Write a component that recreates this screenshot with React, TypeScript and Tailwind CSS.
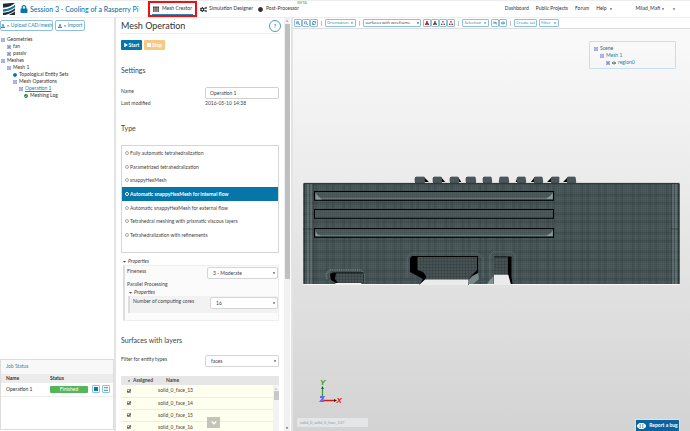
import type { ReactNode } from "react";
import {
  FaCaretDown,
  FaCheckCircle,
  FaCircle,
  FaCogs,
  FaEye,
  FaEyeSlash,
  FaLock,
  FaPlay,
  FaSearchMinus,
  FaSearchPlus,
  FaSyncAlt,
  FaTh,
  FaUpload,
} from "react-icons/fa";

const MESH_TYPES = [
  "Fully automatic tetrahedralization",
  "Parametrized tetrahedralization",
  "snappyHexMesh",
  "Automatic snappyHexMesh for internal flow",
  "Automatic snappyHexMesh for external flow",
  "Tetrahedral meshing with prismatic viscous layers",
  "Tetrahedralization with refinements",
];

const FACES = ["solid_0_face_13", "solid_0_face_14", "solid_0_face_15", "solid_0_face_16"];

function Expander({ open }: { open?: boolean }) {
  return (
    <svg viewBox="0 0 8 8" className="size-1 shrink-0">
      <rect x="0.5" y="0.5" width="7" height="7" fill="#dfe3fa" stroke="#7b88cf" />
      <path d={open ? "M2 4h4" : "M2 4h4M4 2v4"} stroke="#3b4bb0" strokeWidth="1.2" />
    </svg>
  );
}

function TreeRow({ indent, icon, children }: { indent: string; icon: ReactNode; children: ReactNode }) {
  return (
    <li className={`flex h-[7px] items-center gap-0.5 whitespace-nowrap ${indent}`}>
      {icon}
      {children}
    </li>
  );
}

function ToolButton({ children, label }: { children: ReactNode; label?: string }) {
  return (
    <button
      type="button"
      aria-label={label}
      className="flex h-2 shrink-0 items-center gap-0.5 rounded-[1px] border border-[#8cc0dc] bg-white px-px text-[4px] whitespace-nowrap text-[#2a76a2]"
    >
      {children}
    </button>
  );
}

function Divider() {
  return <span className="mx-[3px] h-[5px] w-px bg-[#c4bfba]" />;
}

function SelectBox({ id, value, className }: { id: string; value: string; className: string }) {
  return (
    <div className={`relative ${className}`}>
      <select
        id={id}
        className="block h-3 w-full appearance-none rounded-[2px] border border-[#d5d5d5] bg-white px-[5px] text-[5px] text-[#444]"
      >
        <option>{value}</option>
      </select>
      <FaCaretDown className="pointer-events-none absolute top-1 right-0.5 size-1 text-[#222]" />
    </div>
  );
}

function Header() {
  return (
    <header className="flex h-[18px] shrink-0 items-center border-t border-b border-[#eeeeee] bg-white text-[5px] text-[#333]">
      <svg viewBox="0 0 36 36" className="ml-[3px] size-3 shrink-0">
        <path d="M0 2C10 1 20 0 36 0V36H0Z" fill="#202b33" />
        <path d="M0 14C14 14 25 9 36 0V7C25 15 13 20 0 20Z" fill="#fff" />
        <path d="M0 20C14 19 26 14 36 6V14C25 22 13 25 0 26Z" fill="#0a78b0" />
        <path d="M0 26C16 25 27 20 36 13V16C27 24 14 29 0 29Z" fill="#fff" />
        <path d="M7 36C19 33 29 28 36 22V25C30 30 24 33 17 36Z" fill="#fff" />
      </svg>
      <FaLock className="ml-[5px] size-2 shrink-0 text-[#0876ab]" />
      <h1 className="ml-0.5 w-[118px] shrink-0 text-[7px] font-medium whitespace-nowrap text-[#1273a6]">
        Session 3 - Cooling of a Rasperry Pi
      </h1>
      <nav className="flex shrink-0 items-center whitespace-nowrap">
        <a href="#mesh" className="flex h-4 w-[49px] items-center justify-center border-2 border-[#ee1111]">
          <span className="mt-px flex h-2.5 items-center gap-[3px] border-b border-[#2c86b3] px-px">
            <FaTh className="size-1.5" />
            Mesh Creator
          </span>
        </a>
        <a href="#simulation" className="ml-[3px] flex w-[58px] items-center gap-0.5">
          <FaCogs className="size-[7px]" />
          Simulation Designer
        </a>
        <a href="#post" className="relative flex items-center gap-[3px]">
          <FaCircle className="size-[5px]" />
          Post-Processor
          <span className="absolute -top-1 -right-2 text-[4px] leading-none text-[#559966]">BETA</span>
        </a>
      </nav>
      <nav className="mr-[14px] ml-auto flex items-center gap-[7px]">
        <a href="#dashboard">Dashboard</a>
        <a href="#projects">Public Projects</a>
        <a href="#forum">Forum</a>
        <a href="#help" className="mr-4 flex items-center gap-0.5">
          Help <FaCaretDown className="size-1" />
        </a>
        <a href="#account" className="flex items-center gap-px">
          Milad_Mafi <FaCaretDown className="size-1" />
        </a>
        <button type="button" aria-label="More">
          <FaCaretDown className="size-1" />
        </button>
      </nav>
    </header>
  );
}

function Sidebar() {
  return (
    <aside className="flex w-[116px] shrink-0 flex-col border-r-2 border-[#e3e3e3] text-[5px] text-[#333]">
      <div className="flex gap-0.5 pt-0.5">
        <button
          type="button"
          className="flex h-[11px] w-[53px] items-center justify-center gap-px rounded-[2px] border border-[#8cc0dc] whitespace-nowrap text-[#2f7fac]"
        >
          <FaUpload className="size-1 shrink-0" />
          <FaCaretDown className="size-1 shrink-0" />
          Upload CAD/mesh
        </button>
        <button
          type="button"
          className="flex h-[11px] w-[30px] items-center justify-center gap-px rounded-[2px] border border-[#8cc0dc] text-[#2f7fac]"
        >
          <FaUpload className="size-1" />
          <FaCaretDown className="size-1" />
          Import
        </button>
      </div>
      <ul className="mt-[5px]">
        <TreeRow indent="pl-px" icon={<Expander open />}>Geometries</TreeRow>
        <TreeRow indent="pl-[7px]" icon={<Expander />}>fan</TreeRow>
        <TreeRow indent="pl-[7px]" icon={<Expander />}>passiv</TreeRow>
        <TreeRow indent="pl-px" icon={<Expander open />}>Meshes</TreeRow>
        <TreeRow indent="pl-[7px]" icon={<Expander open />}>Mesh 1</TreeRow>
        <TreeRow indent="pl-[13px]" icon={<FaCircle className="size-1 text-[#0a78b0]" />}>Topological Entity Sets</TreeRow>
        <TreeRow indent="pl-[13px]" icon={<Expander open />}>Mesh Operations</TreeRow>
        <TreeRow indent="pl-[19px]" icon={<Expander open />}>
          <a href="#operation" className="text-[#1f7db0] underline">Operation 1</a>
        </TreeRow>
        <TreeRow indent="pl-6" icon={<FaCheckCircle className="size-1 text-[#138a2a]" />}>Meshing Log</TreeRow>
      </ul>
      <section className="mt-auto mb-px h-[71px] border border-[#dddddd]">
        <h2 className="flex h-[14px] items-center bg-[#f8f8f8] px-[5px] text-[#3b83ac]">Job Status</h2>
        <table className="w-full table-fixed text-left">
          <thead>
            <tr className="h-[9px] bg-[#ececec] leading-none">
              <th className="w-[45px] pl-[5px]">Name</th>
              <th className="pl-1">Status</th>
              <th className="w-[25px]" />
            </tr>
          </thead>
          <tbody>
            <tr className="h-[13px] border-b border-[#eeeeee] leading-none">
              <td className="pl-[5px]">Operation 1</td>
              <td className="pl-1">
                <span className="flex h-[7px] items-center justify-center rounded-[1px] bg-[#55b559] text-white">Finished</span>
              </td>
              <td>
                <div className="flex justify-center gap-0.5">
                  <button type="button" aria-label="Stop job" className="flex size-2 items-center justify-center rounded-[1px] border border-[#8cc0dc]">
                    <span className="size-1 bg-[#0a78b0]" />
                  </button>
                  <button type="button" aria-label="Job details" className="flex size-2 items-center justify-center rounded-[1px] border border-[#8cc0dc]">
                    <svg viewBox="0 0 4 4" className="size-1">
                      <path d="M0 0H4V1.3H0ZM0 2.7H4V4H0Z" fill="#5f9fc2" />
                    </svg>
                  </button>
                </div>
              </td>
            </tr>
          </tbody>
        </table>
      </section>
    </aside>
  );
}

function OperationPanel() {
  return (
    <main className="relative flex w-[175px] shrink-0 overflow-hidden text-[5px] leading-[8px] text-[#444]">
      <div className="w-[163px] shrink-0 pl-[5px]">
        <div className="flex h-4 items-center justify-between border-b border-[#eeeeee]">
          <h2 className="text-[9px] text-[#333]">Mesh Operation</h2>
          <button
            type="button"
            className="mr-[-2px] flex size-3 items-center justify-center rounded-full border border-[#4e9bc4] font-bold text-[#2f7fac]"
          >
            ?
          </button>
        </div>
        <div className="mt-[6px] flex gap-0.5 font-bold text-white">
          <button type="button" className="flex h-[10px] w-[21px] items-center justify-center gap-px rounded-[1px] bg-[#0675a8]">
            <FaPlay className="size-1" />
            Start
          </button>
          <button type="button" disabled className="flex h-[10px] w-[21px] items-center justify-center gap-px rounded-[1px] bg-[#f8c982]">
            <span className="size-1 bg-white" />
            Stop
          </button>
        </div>

        <h3 className="mt-[15px] text-[7px] leading-[10px]">Settings</h3>
        <div className="mt-3 flex justify-between">
          <label htmlFor="op-name">Name</label>
          <input
            id="op-name"
            defaultValue="Operation 1"
            className="h-3 w-[74px] rounded-[2px] border border-[#d0d0d0] px-1"
          />
        </div>
        <div className="flex justify-between">
          <span>Last modified</span>
          <span className="w-[74px]">2016-05-10 14:38</span>
        </div>

        <h3 className="mt-4 text-[7px] leading-[10px]">Type</h3>
        <fieldset className="mt-3 h-[108px] border border-[#d5d5d5]">
          <div className="grid h-24 grid-rows-7">
            {MESH_TYPES.map((type) => (
              <label
                key={type}
                className="flex items-center gap-px pl-[3px] whitespace-nowrap has-checked:bg-[#0675a8] has-checked:font-bold has-checked:text-white"
              >
                <input
                  type="radio"
                  name="mesh-type"
                  defaultChecked={type === MESH_TYPES[3]}
                  className="size-1 appearance-none rounded-full border border-[#aaaaaa] bg-white checked:border-white checked:bg-[#333]"
                />
                {type}
              </label>
            ))}
          </div>
        </fieldset>

        <p className="mt-1 flex items-center gap-px pl-px italic">
          <FaCaretDown className="size-[5px]" />
          Properties
        </p>
        <div className="ml-0.5 h-14 border border-l-2 border-[#eeeeee] border-l-[#dddddd] bg-[#fbfbfb] pt-px pl-0.5">
          <div className="flex justify-between">
            <label htmlFor="fineness">Fineness</label>
            <SelectBox id="fineness" value="3 - Moderate" className="w-[71px]" />
          </div>
          <p className="mt-px">Parallel Processing</p>
          <p className="flex items-center gap-px pl-px italic">
            <FaCaretDown className="size-[5px]" />
            Properties
          </p>
          <div className="ml-px flex h-[17px] justify-between border-l-2 border-[#dddddd] bg-[#f2f2f2] pt-px pl-[3px]">
            <label htmlFor="cores">Number of computing cores</label>
            <SelectBox id="cores" value="16" className="w-[68px]" />
          </div>
        </div>

        <h3 className="mt-[14px] text-[7px] leading-[10px]">Surfaces with layers</h3>
        <div className="mt-[10px] flex justify-between">
          <label htmlFor="entity-type">Filter for entity types</label>
          <SelectBox id="entity-type" value="faces" className="w-[74px]" />
        </div>

        <table className="mt-[9px] w-full table-fixed text-left leading-none">
          <thead>
            <tr className="h-[9px] bg-[#e6e6e6]">
              <th className="w-[37px] pl-1.5">
                <span className="flex items-center gap-0.5">
                  <FaCaretDown className="size-1" />
                  Assigned
                </span>
              </th>
              <th className="pl-2">Name</th>
            </tr>
          </thead>
          <tbody>
            {FACES.map((face) => (
              <tr key={face} className="h-3 border-b border-[#eeeedd] bg-[#fffff0]">
                <td className="pl-1.5">
                  <label className="relative flex size-1">
                    <input type="checkbox" defaultChecked aria-label={face} className="size-1 appearance-none border border-[#aaaaaa] bg-white" />
                    <svg viewBox="0 0 8 8" className="pointer-events-none absolute inset-0 size-1">
                      <path d="M1 4L3 6.5L7.5 1" fill="none" stroke="#222" strokeWidth="2" />
                    </svg>
                  </label>
                </td>
                <td>{face}</td>
              </tr>
            ))}
          </tbody>
        </table>
      </div>
      <div className="absolute right-[12px] bottom-0 flex h-[46px] w-[6px] flex-col items-center bg-[#f3f3f3] pt-0.5">
        <FaCaretDown className="size-1 rotate-180 text-[#aaaaaa]" />
        <span className="h-[9px] w-[5px] bg-[#c8c8c8]" />
      </div>
      <button type="button" aria-label="Scroll down" className="absolute bottom-[3px] left-[91px] flex h-[11px] w-[13px] items-center justify-center bg-[#c4c4b8]">
        <svg viewBox="0 0 8 8" className="size-[6px]">
          <path d="M1 2L4 5L7 2" fill="none" stroke="#fff" strokeWidth="2" />
        </svg>
      </button>
      <div className="ml-[5px] flex w-[6px] shrink-0 flex-col items-center justify-between bg-[#f1f1f1] py-px">
        <FaCaretDown className="size-1 rotate-180 text-[#888888]" />
        <span className="mt-px mb-auto h-[62%] w-[5px] bg-[#bfbfbf]" />
        <FaCaretDown className="size-1 text-[#333]" />
      </div>
    </main>
  );
}

const BUMPS = [
  "M415 183V178L416 177H424L425 183Z",
  "M433 183V178L434 177H441L442 183Z",
  "M450 183V178L451 177H458L459 183Z",
  "M466 183V178L467 177H475L476 183Z",
  "M483 183V178L484 177H491L492 183Z",
  "M499 183L500 177H508L509 183Z",
  "M517 183V178L518 177H525L526 183Z",
  "M534 183V178L535 177H542L543 183Z",
  "M551 183V178L552 177H559V183Z",
  "M567 183V178L568 177H575L576 183Z",
];

const SLOTS = [191, 209, 228];

function MeshView() {
  return (
    <svg viewBox="293 29 397 402" preserveAspectRatio="xMidYMid meet" className="absolute inset-0 h-full w-full">
      <defs>
        <pattern id="fine" width="2" height="2" patternUnits="userSpaceOnUse">
          <rect width="2" height="2" fill="#4f5d5f" />
          <path d="M0 0H2M0 0V2" stroke="#3e4a4c" strokeWidth="0.8" />
        </pattern>
        <pattern id="plaid" width="17" height="19" patternUnits="userSpaceOnUse">
          <path d="M4 0V19M10 0V19" stroke="#232d30" strokeOpacity="0.16" strokeWidth="3" />
          <path d="M0 5H17M0 13H17" stroke="#232d30" strokeOpacity="0.18" strokeWidth="3" />
        </pattern>
        <pattern id="dots" width="3" height="3" patternUnits="userSpaceOnUse">
          <rect width="3" height="3" fill="#475255" />
          <path d="M0 0H3M0 0V3" stroke="#2e383a" strokeWidth="0.8" />
        </pattern>
      </defs>

      <path d="M424 177L430 183H425ZM441 177L446 183H442ZM458 177L462 183H459ZM518 177L515 183H518ZM535 177L530 183H535ZM552 177L546 183H552ZM568 177L562 183H568Z" fill="#000" />
      {BUMPS.map((d) => (
        <path key={d} d={d} fill="#4a5659" stroke="#2c3537" strokeWidth="0.6" />
      ))}

      <rect x="303" y="182" width="377" height="103" rx="2" fill="#f8f8f8" />
      {BUMPS.map((d) => (
        <path key={d} d={d} fill="#4a5659" />
      ))}
      <rect x="303.5" y="183" width="376" height="101" rx="1" fill="url(#fine)" />
      <rect x="303.5" y="183" width="376" height="101" rx="1" fill="url(#plaid)" />
      <path d="M303.5 183.3H679.5" stroke="#252d2f" strokeWidth="0.8" />
      <path d="M308 184V284M311 184V284M673 184V284M676 184V284" stroke="#829493" strokeOpacity="0.4" strokeWidth="2" />
      <path d="M304 184V284M679 184V284" stroke="#182022" />
      <path d="M313.5 184V284M671.5 184V284" stroke="#2b3537" strokeWidth="0.5" />
      <path d="M303 229H313M671 229H679" stroke="#182022" strokeWidth="0.5" />

      {SLOTS.map((y) => (
        <rect key={y} x="314.5" y={y + 0.5} width="239" height="8.8" fill="url(#fine)" stroke="#000" />
      ))}
      <path d="M316 198.3H552M316 235.3H552" stroke="#7d8d8c" strokeWidth="0.7" />
      <path d="M315.5 193L318 196L322 199.5H315.5ZM315.5 230L317 234L321 236H315.5ZM552.8 193V199H546L550 196ZM552.8 230V236H546L551 233Z" fill="#91a3a2" fillOpacity="0.85" />

      {/* connector openings along the lower edge */}
      <path d="M327 279L326 274L330 270H361L364 274V283" fill="none" stroke="#8fa19f" strokeOpacity="0.6" strokeWidth="1.5" strokeDasharray="1 0.8" />
      <path d="M330 274L333 272.5H363.5V283H336L331 280Z" fill="#000" />
      <path d="M336 273.3H363V283H338L335 279Z" fill="url(#dots)" />
      <path d="M334 285L336 283H361L362 285Z" fill="#f2f2f2" />

      <path d="M407 278V258L411 253H478L483 259V279" fill="none" stroke="#748483" strokeOpacity="0.5" strokeWidth="0.8" />
      <path d="M410 258L412 256H478V273L471 278L469 280V285H419L423 279L410 272Z" fill="#000" />
      <path d="M417.5 257H477V270L471 276L468.5 280H425.5L426 276L423 272L417.5 270Z" fill="url(#dots)" />
      <path d="M419 285L425 279.5H468.5V285Z" fill="#ebebeb" />
      <path d="M478 273L472 276L468.5 280V284H473L479 279Z" fill="#8da09f" fillOpacity="0.7" />

      <path d="M490 284V255L493 252H512L515 255V280" fill="none" stroke="#748483" strokeOpacity="0.6" strokeWidth="0.8" />
      <path d="M494 256.5H511.5V277L512.5 284H508L507 275H494Z" fill="#000" />
      <rect x="494" y="257.3" width="14" height="18" fill="url(#dots)" />
      <path d="M494 274.8H508.3L511 285H494Z" fill="#ebebeb" />
      <path d="M493.5 276V284H487L490 280Z" fill="#8da09f" fillOpacity="0.8" />

      {/* axes */}
      <path d="M322.5 400V388" stroke="#28a028" strokeWidth="1.2" />
      <path d="M321.2 389L322.5 386L323.8 389Z" fill="#145214" />
      <path d="M323 400.5H335" stroke="#dd1111" strokeWidth="1.4" />
      <path d="M334 399L337 400.5L334 402Z" fill="#660c0c" />
      <path d="M320 396H325L323 400H324V402H319L322 398H320Z" fill="#6666ee" />
      <text x="320" y="385" fontSize="8" fontWeight="bold" fontStyle="italic" fontFamily="Liberation Sans" fill="#28a028">Y</text>
      <text x="336.5" y="403" fontSize="8" fontWeight="bold" fontStyle="italic" fontFamily="Liberation Sans" fill="#dd1111">X</text>
    </svg>
  );
}

function MeshStyleIcon({ filled, outline }: { filled: string; outline: string }) {
  return (
    <svg viewBox="0 0 8 8" className="size-1">
      <path d="M4 0.5L7.5 7H0.5Z" fill={filled} stroke={outline} />
      <path d="M3 0h2v2H3ZM0 6h2v2H0ZM6 6h2v2H6Z" fill={outline} />
    </svg>
  );
}

function Viewer() {
  return (
    <section className="flex min-w-0 flex-1 flex-col border-l-2 border-[#e3e3e3]">
      <div className="flex h-[11px] shrink-0 items-center border-b border-[#dddddd] pl-px font-['Open_Sans',sans-serif]">
        <ToolButton label="Zoom in"><FaSearchPlus className="size-1" /></ToolButton>
        <ToolButton label="Zoom out"><FaSearchMinus className="size-1" /></ToolButton>
        <ToolButton label="Reset view"><FaSyncAlt className="size-1" /></ToolButton>
        <Divider />
        <ToolButton>Orientation <FaCaretDown className="size-1" /></ToolButton>
        <Divider />
        <div className="relative w-[58px]">
          <select
            aria-label="Render mode"
            className="block h-2 w-full appearance-none rounded-[1px] border border-[#8cc0dc] bg-white px-px text-[4px] leading-none text-[#333]"
          >
            <option>surfaces with wireframe</option>
          </select>
          <FaCaretDown className="pointer-events-none absolute top-0.5 right-px size-1 text-[#222]" />
        </div>
        <div className="ml-0.5 flex">
          <ToolButton label="Volumes"><MeshStyleIcon filled="#cc1111" outline="#cc1111" /></ToolButton>
          <ToolButton label="Faces"><MeshStyleIcon filled="#cc1111" outline="#555555" /></ToolButton>
          <ToolButton label="Edges"><MeshStyleIcon filled="none" outline="#555555" /></ToolButton>
          <ToolButton label="Nodes"><MeshStyleIcon filled="none" outline="#cc1111" /></ToolButton>
        </div>
        <Divider />
        <ToolButton>Selection <FaCaretDown className="size-1" /></ToolButton>
        <span className="w-0.5" />
        <ToolButton label="Hide"><FaEyeSlash className="size-1" /></ToolButton>
        <ToolButton label="Show"><FaEye className="size-1" /></ToolButton>
        <Divider />
        <ToolButton>Create set</ToolButton>
        <span className="w-0.5" />
        <ToolButton>Filter <FaCaretDown className="size-1" /></ToolButton>
      </div>

      <div className="relative min-h-0 flex-1 bg-linear-to-b from-[#fafafa] to-[#d3d3d3] text-[5px]">
        <MeshView />
        <ul className="absolute top-3 right-[14px] h-7 w-[87px] rounded-[1px] border border-[#c9dfeb] pt-[3px] text-[#2f7fac]">
          <TreeRow indent="pl-1" icon={<Expander open />}><span className="text-[#355a78]">Scene</span></TreeRow>
          <TreeRow indent="pl-[10px]" icon={<Expander open />}>Mesh 1</TreeRow>
          <TreeRow indent="pl-4" icon={<Expander />}>
            <FaEye className="size-1 text-[#444]" />
            region0
          </TreeRow>
        </ul>
        <p className="absolute bottom-1 left-1 flex h-[9px] w-[71px] items-center rounded-[1px] bg-[#e3e5e6] px-[3px] text-[4px] text-[#8c9fab]">
          solid_0_solid_0_face_137
        </p>
        <button
          type="button"
          className="absolute right-[10px] bottom-0 flex h-3 w-[45px] items-center justify-center gap-[3px] border border-b-0 border-[#d8e6ef] bg-[#0864a0] font-bold whitespace-nowrap text-white"
        >
          <svg viewBox="0 0 18 12" className="h-[6px] w-[9px] shrink-0">
            <path d="M5 0H13L18 4V8L13 12H5L0 8V4Z" fill="#fff" />
            <path d="M5 3.5H8M5 6H8M5 8.5H8M10 3.5H13M10 6H13M10 8.5H13" stroke="#0864a0" strokeWidth="1.3" />
          </svg>
          Report a bug
        </button>
      </div>
    </section>
  );
}

export default function App() {
  return (
    <div className="flex h-screen flex-col overflow-hidden bg-white font-['Lato',sans-serif]">
      <Header />
      <div className="flex min-h-0 flex-1">
        <Sidebar />
        <OperationPanel />
        <Viewer />
      </div>
    </div>
  );
}
